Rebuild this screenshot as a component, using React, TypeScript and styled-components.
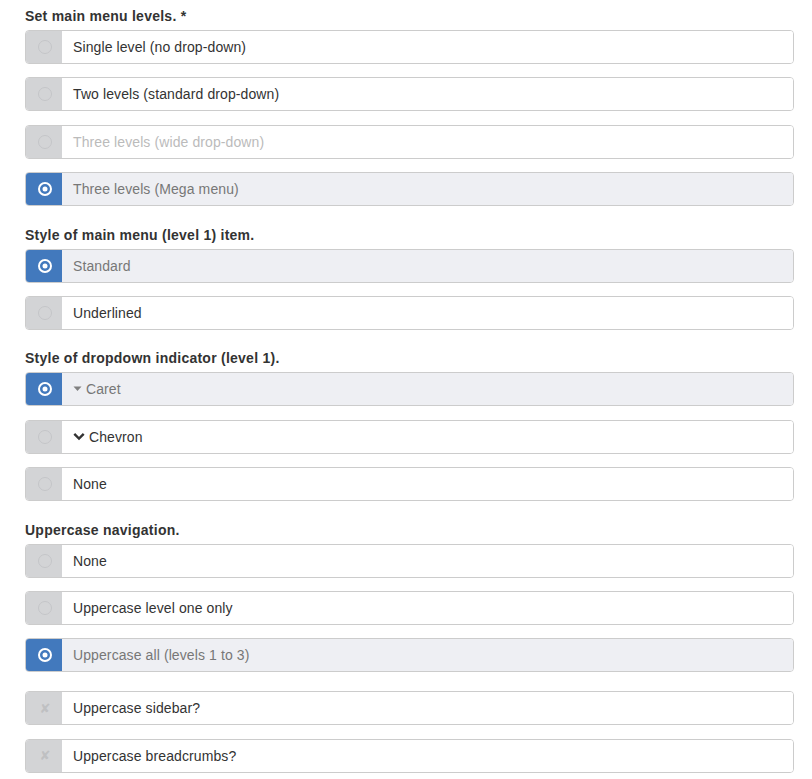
import React from "react";
import styled, { createGlobalStyle, css } from "styled-components";

const GlobalStyle = createGlobalStyle`
  html, body { margin: 0; padding: 0; background: #ffffff; }
  body { font-family: "Liberation Sans", Arial, Helvetica, sans-serif; color: #333333; }
`;

const Page = styled.div`
  padding: 1px 18px 0 25px;
`;

const Section = styled.section`
  display: flex;
  flex-direction: column;
`;

const Heading = styled.div`
  margin: 6px 0 5px;
  font-size: 14px;
  line-height: 18px;
  font-weight: bold;
  letter-spacing: 0.25px;
  color: #333333;
`;

const ExtraGroup = styled.div`
  margin-top: 5.5px;
`;

type State = "off" | "on" | "disabled";

const Row = styled.label`
  display: flex;
  height: 34px;
  box-sizing: border-box;
  border: 1px solid #cccccc;
  border-radius: 4px;
  overflow: hidden;
  margin-bottom: 13.4px;
  cursor: pointer;
`;

const Addon = styled.span<{ $state: State }>`
  flex: 0 0 36px;
  display: flex;
  align-items: center;
  justify-content: center;
  padding-left: 2px;
  box-sizing: border-box;
  background: ${(p) => (p.$state === "on" ? "#4279bd" : "#d3d4d6")};
`;

const Text = styled.span<{ $state: State }>`
  flex: 1;
  display: flex;
  align-items: center;
  gap: 3px;
  padding-left: 11px;
  font-size: 14px;
  letter-spacing: 0.1px;
  ${(p) =>
    p.$state === "on"
      ? css`
          background: #eeeff3;
          color: #777777;
        `
      : p.$state === "disabled"
      ? css`
          background: #ffffff;
          color: #bbbbbb;
        `
      : css`
          background: #ffffff;
          color: #333333;
        `}
`;

const CrossGlyph = styled.span`
  font-family: "DejaVu Sans", sans-serif;
  font-size: 13px;
  font-weight: bold;
  color: #bfc0c2;
  line-height: 1;
`;

const RadioIcon = ({ on }: { on: boolean }) =>
  on ? (
    <svg width="16" height="16" viewBox="0 0 16 16">
      <circle cx="8" cy="8" r="6" fill="none" stroke="#ffffff" strokeWidth="2" />
      <circle cx="8" cy="8" r="2.5" fill="#ffffff" />
    </svg>
  ) : (
    <svg width="16" height="16" viewBox="0 0 16 16">
      <circle cx="8" cy="8" r="6.5" fill="none" stroke="#c4c5c8" strokeWidth="1" />
    </svg>
  );

const CaretIcon = () => (
  <svg width="10" height="6" viewBox="0 0 10 6">
    <path d="M0.5 0.5 L8.5 0.5 L4.5 5 Z" fill="#808080" />
  </svg>
);

const ChevronIcon = () => (
  <svg width="13" height="9" viewBox="0 0 13 9">
    <path d="M1.3 1.8 L6 6.5 L10.7 1.8" fill="none" stroke="#333333" strokeWidth="2.4" />
  </svg>
);

type Opt = { label: string; state: State; icon?: "caret" | "chevron" };

const RadioOption = ({ opt }: { opt: Opt }) => (
  <Row>
    <Addon $state={opt.state}>
      <RadioIcon on={opt.state === "on"} />
    </Addon>
    <Text $state={opt.state}>
      {opt.icon === "caret" && <CaretIcon />}
      {opt.icon === "chevron" && <ChevronIcon />}
      {opt.label}
    </Text>
  </Row>
);

const CheckOption = ({ label }: { label: string }) => (
  <Row>
    <Addon $state="off">
      <CrossGlyph>✘</CrossGlyph>
    </Addon>
    <Text $state="off">{label}</Text>
  </Row>
);

const groups: { title: string; options: Opt[] }[] = [
  {
    title: "Set main menu levels. *",
    options: [
      { label: "Single level (no drop-down)", state: "off" },
      { label: "Two levels (standard drop-down)", state: "off" },
      { label: "Three levels (wide drop-down)", state: "disabled" },
      { label: "Three levels (Mega menu)", state: "on" },
    ],
  },
  {
    title: "Style of main menu (level 1) item.",
    options: [
      { label: "Standard", state: "on" },
      { label: "Underlined", state: "off" },
    ],
  },
  {
    title: "Style of dropdown indicator (level 1).",
    options: [
      { label: "Caret", state: "on", icon: "caret" },
      { label: "Chevron", state: "off", icon: "chevron" },
      { label: "None", state: "off" },
    ],
  },
  {
    title: "Uppercase navigation.",
    options: [
      { label: "None", state: "off" },
      { label: "Uppercase level one only", state: "off" },
      { label: "Uppercase all (levels 1 to 3)", state: "on" },
    ],
  },
];

export default function App() {
  return (
    <>
      <GlobalStyle />
      <Page>
        {groups.map((g) => (
          <Section key={g.title}>
            <Heading>{g.title}</Heading>
            {g.options.map((o) => (
              <RadioOption key={o.label} opt={o} />
            ))}
          </Section>
        ))}
        <ExtraGroup>
          <CheckOption label="Uppercase sidebar?" />
          <CheckOption label="Uppercase breadcrumbs?" />
        </ExtraGroup>
      </Page>
    </>
  );
}
